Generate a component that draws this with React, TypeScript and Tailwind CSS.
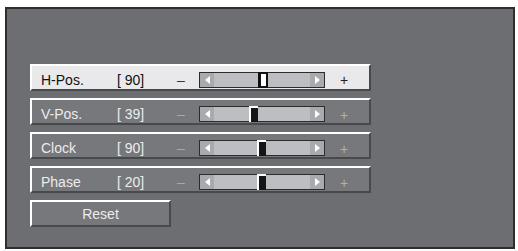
import React from 'react';

type Row = { label: string; value: number; thumb: number; active?: boolean };

const rows: Row[] = [
  { label: 'H-Pos.', value: 90, thumb: 59, active: true },
  { label: 'V-Pos.', value: 39, thumb: 50 },
  { label: 'Clock', value: 90, thumb: 58 },
  { label: 'Phase', value: 20, thumb: 58 },
];

function Track({ thumb, active }: { thumb: number; active?: boolean }) {
  return (
    <div className="relative w-[126px] h-[16px] border border-[#2c2c2e] bg-[#bdbec1] flex justify-between">
      <div className="w-[14px] h-full bg-[#a9aaad] flex items-center justify-center">
        <svg width="5" height="8" viewBox="0 0 5 8">
          <path d="M5 0 L0 4 L5 8 Z" fill="#ffffff" />
        </svg>
      </div>
      <div className="w-[14px] h-full bg-[#a9aaad] flex items-center justify-center">
        <svg width="5" height="8" viewBox="0 0 5 8">
          <path d="M0 0 L5 4 L0 8 Z" fill="#ffffff" />
        </svg>
      </div>
      {active ? (
        <div className="absolute top-[-1px] w-[10px] h-[16px] bg-[#111] pt-[2px]" style={{ left: thumb - 1 }}>
          <div className="ml-[3px] w-[5px] h-[12px] bg-white" />
        </div>
      ) : (
        <div
          className="absolute top-[-1px] w-[9px] h-[16px] bg-[#151515] border-t-2 border-l-2 border-white"
          style={{ left: thumb - 1 }}
        />
      )}
    </div>
  );
}

export default function App() {
  return (
    <div className="w-[518px] h-[251px] bg-white pt-[7px] pl-[5px]" style={{ fontFamily: '"Liberation Sans", Arial, sans-serif' }}>
      <div className="w-[510px] h-[242px] border-2 border-[#2e2e30] bg-[#6d6e72] pl-[23px] pt-[55px] flex flex-col gap-[7px]">
        {rows.map((r) => (
          <div
            key={r.label}
            className={`w-[341px] h-[27px] border-t-2 border-l-2 border-white border-b-2 border-r-2 border-b-[#48494c] border-r-[#48494c] flex items-center pt-[5px] text-[14px] ${
              r.active ? 'bg-[#e9e9eb] text-[#111]' : 'bg-[#77787c] text-[#ececec]'
            }`}
          >
            <span className="w-[85px] pl-[9px]">{r.label}</span>
            <span className="w-[60px]">[ {r.value}]</span>
            <span className={`w-[22px] ${r.active ? 'text-[#333]' : 'text-[#a9a9ab]'}`}>–</span>
            <Track thumb={r.thumb} active={r.active} />
            <span className={`ml-[15px] ${r.active ? 'text-[#222]' : 'text-[#b0b0b2] mt-[3px]'}`}>+</span>
          </div>
        ))}
        <div className="w-[141px] h-[27px] border-t-2 border-l-2 border-white border-b-2 border-r-2 border-b-[#48494c] border-r-[#48494c] bg-[#77787c] flex items-center justify-center text-[14px] text-[#ececec] pt-[2px]">
          Reset
        </div>
      </div>
    </div>
  );
}
